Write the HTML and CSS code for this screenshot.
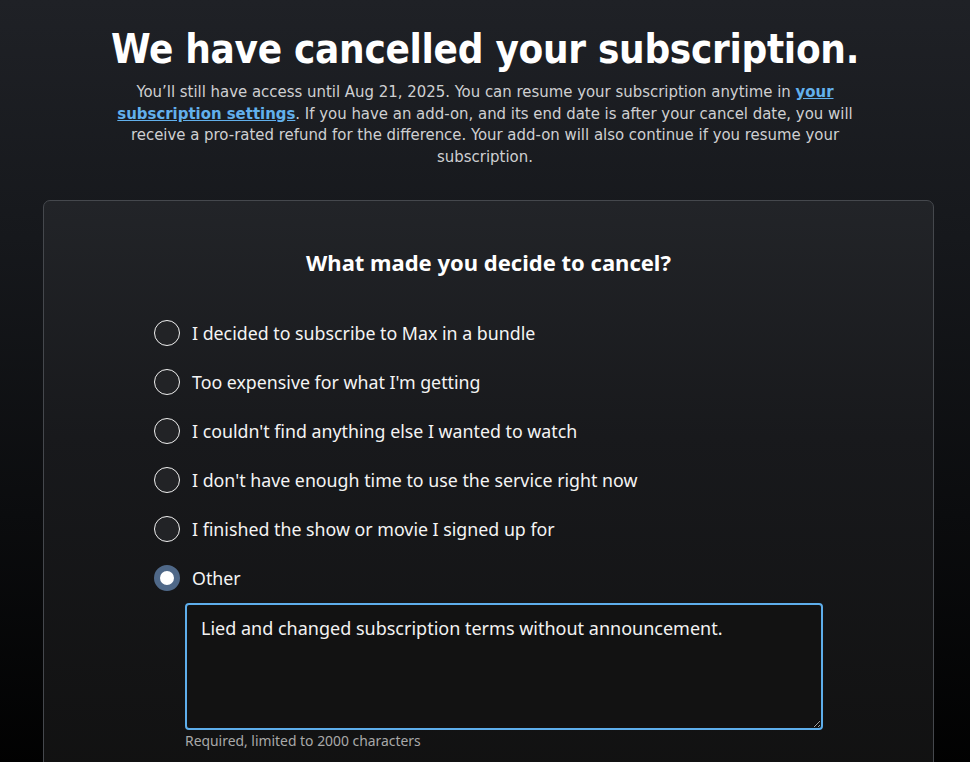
FILE: index.html
```html
<!DOCTYPE html>
<html lang="en">
<head>
    <meta charset="UTF-8">
    <meta name="viewport" content="width=device-width, initial-scale=1.0">
    <title>Subscription cancelled</title>
    <link rel="stylesheet" href="styles.css">
</head>
<body>
    <header class="intro">
        <h1>We have cancelled your subscription.</h1>
        <p>You’ll still have access until Aug 21, 2025. You can resume your subscription anytime in <a href="#">your subscription settings</a>. If you have an add-on, and its end date is after your cancel date, you will receive a pro-rated refund for the difference. Your add-on will also continue if you resume your subscription.</p>
    </header>

    <main class="card">
        <h2>What made you decide to cancel?</h2>
        <form class="reasons">
            <label class="reason"><input type="radio" name="reason"><span class="dot"></span>I decided to subscribe to Max in a bundle</label>
            <label class="reason"><input type="radio" name="reason"><span class="dot"></span>Too expensive for what I'm getting</label>
            <label class="reason"><input type="radio" name="reason"><span class="dot"></span>I couldn't find anything else I wanted to watch</label>
            <label class="reason"><input type="radio" name="reason"><span class="dot"></span>I don't have enough time to use the service right now</label>
            <label class="reason"><input type="radio" name="reason"><span class="dot"></span>I finished the show or movie I signed up for</label>
            <label class="reason"><input type="radio" name="reason" checked><span class="dot"></span>Other</label>
            <div class="other">
                <textarea rows="4">Lied and changed subscription terms without announcement.</textarea>
                <small>Required, limited to 2000 characters</small>
            </div>
        </form>
    </main>
</body>
</html>
```

FILE: styles.css
```css
body {
    margin: 0;
    min-height: 762px;
    background: linear-gradient(180deg, #1f2126 0%, #16181c 30%, #000 100%);
    color: #fff;
    font-family: "Noto Sans", Arial, sans-serif;
}
.intro {
    padding-top: 24px;
    text-align: center;
}
.intro h1 {
    margin: 0;
    white-space: nowrap;
    font-family: "DejaVu Sans", sans-serif;
    font-stretch: condensed;
    font-size: 40px;
    font-weight: bold;
    line-height: 50px;
    letter-spacing: -0.3px;
}
.intro p {
    max-width: 760px;
    margin: 7px auto 0;
    font-family: "DejaVu Sans", sans-serif;
    font-stretch: condensed;
    font-size: 16.6px;
    line-height: 21.7px;
    color: #cfd0d2;
}
.intro a {
    color: #62b0ec;
    font-weight: bold;
}
.card {
    margin: 32px 36px 0 43px;
    padding: 47px 110px 40px;
    border: 1px solid #45484d;
    border-radius: 7px;
    background: linear-gradient(180deg, #222428 0%, #18191c 40%, #111 100%);
}
.card h2 {
    margin: 0 0 33px;
    text-align: center;
    font-size: 22px;
    font-weight: bold;
    line-height: 28px;
}
.reasons {
    display: flex;
    flex-direction: column;
}
.reason {
    display: flex;
    align-items: center;
    height: 49px;
    font-size: 17.8px;
    color: #f4f4f4;
}
.reason input {
    display: none;
}
.dot {
    box-sizing: border-box;
    width: 26px;
    height: 26px;
    margin-right: 12px;
    border: 1.5px solid #f0f0f0;
    border-radius: 50%;
    background: #222326;
}
.reason input:checked + .dot {
    border: 6px solid #4f6888;
    background: #fff;
}
.other {
    margin-left: 31px;
}
.other textarea {
    display: block;
    box-sizing: border-box;
    width: 100%;
    height: 127px;
    padding: 11px 14px;
    border: 2px solid #5eaeeb;
    border-radius: 4px;
    background: #121212;
    color: #f2f2f2;
    font-family: "Noto Sans", Arial, sans-serif;
    font-size: 18px;
    line-height: 24px;
    outline: none;
}
.other small {
    display: block;
    margin-top: 1px;
    font-size: 13.9px;
    color: #a9a9a9;
}
```
